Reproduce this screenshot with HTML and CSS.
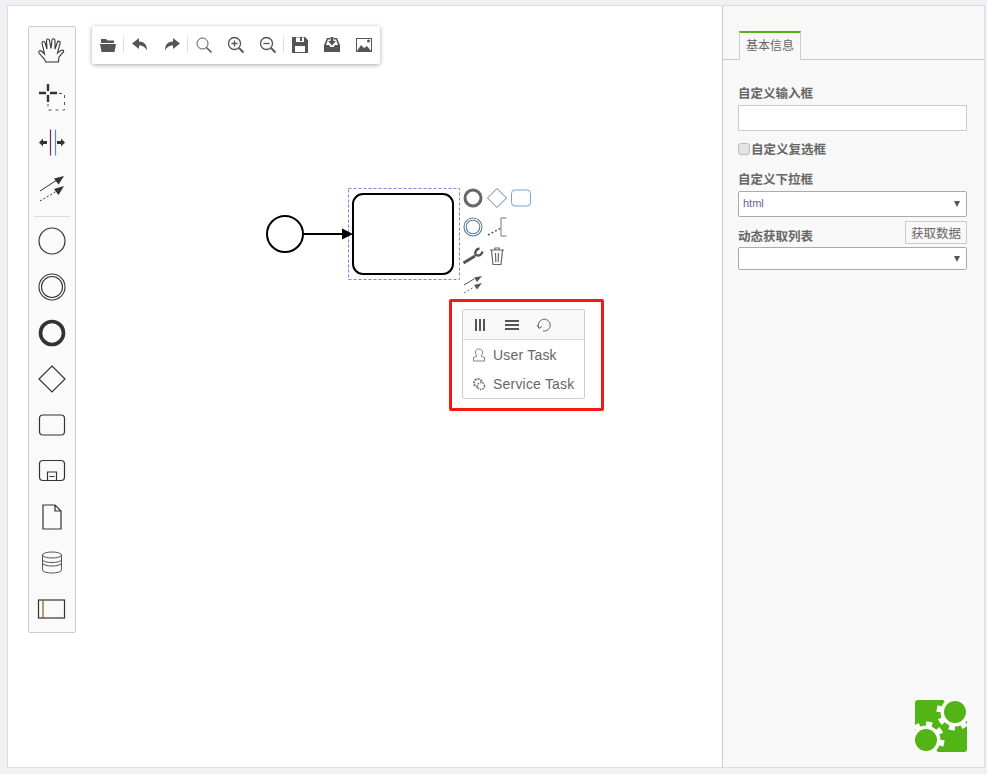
FILE: index.html
```html
<!DOCTYPE html>
<html lang="en">
<head>
  <meta charset="UTF-8" />
  <title>流程设计器</title>
  <link rel="stylesheet" href="styles.css">
</head>
<body>
  <div class="frame">
    <main class="canvas">
      <!-- palette -->
      <div class="palette">
        <div class="tool"><svg width="30" height="30" viewBox="0 0 30 30" fill="none" stroke="#333" stroke-width="1.1"><path d="M9 26c-1-3-4-5-7-9-1-2 1-3 2.500-2l3 3L5 7c0-2 2-2 3-.5L10 13 9.500 4.500c0-2 2.500-2 3 0L14 12.500 15 4c.5-2 3-1.500 3 .5V13l2.500-7c.5-1.500 3-1 2.700 1L20.500 17c2-1.500 3.500-3 5-3 1.500.5 1.500 1.500.5 2.500L22 21l-.5 5z"/></svg></div>
        <div class="tool"><svg width="30" height="30" viewBox="0 0 30 30" fill="none" stroke="#333"><path d="M11 2v7M11 13v7M2 11h7M13 11h7" stroke-width="2.400"/><path d="M22 11.500h5.500v16.500H11V22" stroke="#555" stroke-dasharray="3 4"/></svg></div>
        <div class="tool"><svg width="30" height="30" viewBox="0 0 30 30" fill="#333"><path d="M13.500 1.500v26" stroke="#7a2a5a" stroke-width="1.200"/><path d="M18.500 1.500v26" stroke="#5a8fb0" stroke-width="1.200"/><path d="M2 14.500l4-4v2.500h4v3H6v2.500zM28 14.500l-4-4v2.500h-4v3h4v2.500z"/></svg></div>
        <div class="tool"><svg width="30" height="30" viewBox="0 0 30 30" fill="#333"><path d="M3 17l17-11" stroke="#333" stroke-width="1"/><path d="M27 2l-10 2.500 4.500 6z"/><path d="M3 27l17-10" stroke="#333" stroke-dasharray="2 2"/><path d="M27 12l-10 3 4.500 6z"/></svg></div>
        <div class="sep"></div>
        <div class="tool"><svg width="30" height="30" viewBox="0 0 30 30" fill="none" stroke="#333" stroke-width="1.200"><circle cx="15" cy="15" r="13"/></svg></div>
        <div class="tool"><svg width="30" height="30" viewBox="0 0 30 30" fill="none" stroke="#333" stroke-width="1.100"><circle cx="15" cy="15" r="13"/><circle cx="15" cy="15" r="10.500"/></svg></div>
        <div class="tool"><svg width="30" height="30" viewBox="0 0 30 30" fill="none" stroke="#333" stroke-width="3.600"><circle cx="15" cy="15" r="11.500"/></svg></div>
        <div class="tool"><svg width="30" height="30" viewBox="0 0 30 30" fill="none" stroke="#333" stroke-width="1.200"><path d="M15 2l13 13-13 13L2 15z"/></svg></div>
        <div class="tool"><svg width="30" height="30" viewBox="0 0 30 30" fill="none" stroke="#333" stroke-width="1.200"><rect x="2.500" y="5" width="25" height="20" rx="3.500"/></svg></div>
        <div class="tool"><svg width="30" height="30" viewBox="0 0 30 30" fill="none" stroke="#333" stroke-width="1.200"><rect x="2.500" y="4.500" width="25" height="20" rx="3.500"/><path d="M10.500 24.500V16h9v8.500M12.500 20.500h5"/></svg></div>
        <div class="tool"><svg width="30" height="30" viewBox="0 0 30 30" fill="none" stroke="#333" stroke-width="1.200"><path d="M6 3h12l6 6v18H6zM18 3v6h6"/></svg></div>
        <div class="tool"><svg width="30" height="30" viewBox="0 0 30 30" fill="none" stroke="#444" stroke-width=".9"><ellipse cx="15" cy="7" rx="9.500" ry="3"/><path d="M5.500 7v15c0 4 19 4 19 0V7M5.500 11.500c0 4 19 4 19 0M5.500 15c0 4 19 4 19 0"/></svg></div>
        <div class="tool"><svg width="30" height="30" viewBox="0 0 30 30" fill="none" stroke="#333" stroke-width="1.200"><rect x="1.500" y="6" width="26" height="18"/><path d="M6 6v18" stroke="#8a5a20"/></svg></div>
      </div>

      <!-- top toolbar -->
      <div class="toolbar">
        <button class="tb"><svg width="18" height="18" viewBox="0 0 18 18" fill="#555"><path d="M2 3h5l1.500 1.500H15V7H2zM1 8h16l-1.500 8h-13z"/></svg></button>
        <i class="tb-sep"></i>
        <button class="tb"><svg width="18" height="18" viewBox="0 0 18 18" fill="#555"><path d="M1 7.500L8 2v3.500c5 0 8 3 8 9-2-3.500-4-5-8-5V13z"/></svg></button>
        <button class="tb"><svg width="18" height="18" viewBox="0 0 18 18" fill="#555"><path d="M17 7.500L10 2v3.500c-5 0-8 3-8 9 2-3.500 4-5 8-5V13z"/></svg></button>
        <i class="tb-sep"></i>
        <button class="tb"><svg width="18" height="18" viewBox="0 0 18 18" fill="none" stroke="#555" stroke-width="1"><circle cx="7.500" cy="7.500" r="5.500"/><path d="M11.500 11.500l5 5" stroke-width="1.600"/></svg></button>
        <button class="tb"><svg width="18" height="18" viewBox="0 0 18 18" fill="none" stroke="#555" stroke-width="1.300"><circle cx="7.500" cy="7.500" r="6"/><path d="M12 12l4.500 4.500" stroke-width="1.800"/><path d="M4.500 7.500h6M7.500 4.500v6"/></svg></button>
        <button class="tb"><svg width="18" height="18" viewBox="0 0 18 18" fill="none" stroke="#555" stroke-width="1.300"><circle cx="7.500" cy="7.500" r="6"/><path d="M12 12l4.500 4.500" stroke-width="1.800"/><path d="M4.500 7.500h6"/></svg></button>
        <i class="tb-sep"></i>
        <button class="tb"><svg width="18" height="18" viewBox="0 0 18 18" fill="#555"><path fill-rule="evenodd" d="M1 1h13l3 3v13H1zM5 1.500V6h8V1.500h-2V5H9V1.500zM4 10v6h10v-6z"/></svg></button>
        <button class="tb"><svg width="18" height="18" viewBox="0 0 18 18" fill="#555"><path d="M4 2h3v1.500H5L3 9h3l1.500 2h3L12 9h3l-2-5.500h-2V2h3l3 7v7H1V9z"/><path d="M7.500 1h3v4H13l-4 4.500L5 5h2.500z"/></svg></button>
        <button class="tb"><svg width="18" height="18" viewBox="0 0 18 18"><rect x="1.500" y="2.500" width="15" height="13" fill="#fff" stroke="#555"/><path d="M2 15l4-6 3 3 3-2 4 5z" fill="#555"/><circle cx="13.500" cy="5" r="1.500" fill="#555"/></svg></button>
      </div>

      <!-- diagram -->
      <svg class="diagram" width="200" height="100" viewBox="262 184 200 100" fill="none">
        <rect x="348.500" y="188.500" width="111" height="91" stroke="#7f7ff7" stroke-dasharray="3 2"/>
        <circle cx="285" cy="234" r="18" stroke="#000" stroke-width="2"/>
        <path d="M304 234h40" stroke="#000" stroke-width="2"/>
        <path d="M342 228.500l11 5.500-11 5.500z" fill="#000"/>
        <rect x="353" y="194" width="100" height="80" rx="10" fill="#fff" stroke="#000" stroke-width="2"/>
      </svg>

      <!-- context pad -->
      <div class="pad">
        <svg width="20" height="20" viewBox="0 0 20 20" fill="none" stroke="#666" stroke-width="3"><circle cx="10" cy="10" r="8"/></svg>
        <svg width="20" height="20" viewBox="0 0 20 20" fill="none" stroke="#5a7f9a"><path d="M10 .5l9.500 9.500-9.500 9.500L.5 10z"/></svg>
        <svg width="20" height="20" viewBox="0 0 20 20" fill="none" stroke="#6fa8cc"><rect x=".5" y="2" width="19" height="16" rx="3.500"/></svg>
        <svg width="20" height="20" viewBox="0 0 20 20" fill="none" stroke="#5a7f9a" stroke-width="1.100"><circle cx="10" cy="10" r="9"/><circle cx="10" cy="10" r="6.800"/></svg>
        <svg width="20" height="20" viewBox="0 0 20 20" fill="none" stroke="#555"><path d="M1 18l13-7" stroke-dasharray="2 2" stroke-width="1.500"/><path d="M19.500 1H14v18h5.500" stroke="#777"/></svg>
        <i></i>
        <svg width="22" height="20" viewBox="0 0 22 20" fill="none" stroke="#555"><path d="M1.500 17L13 10" stroke-width="3"/><path d="M20.500 5.500c-.5 3-3.500 5-6.500 3.500-1.500-2-.5-6 3.500-6.500" stroke-width="2.400"/></svg>
        <svg width="20" height="20" viewBox="0 0 20 20" fill="none" stroke="#666"><path d="M3 4h14M8 3.500V2h4v1.500M4.500 4.500L6 18.500h8l1.500-14M8.500 7l.3 9M11.500 7l-.3 9" stroke-width="1.200"/></svg>
        <i></i>
        <svg width="20" height="20" viewBox="0 0 20 20" fill="#555"><path d="M1 10l10-6" stroke="#555"/><path d="M19 1l-8 1.500 3 4.500z"/><path d="M1 18l10-6" stroke="#666" stroke-dasharray="2 2"/><path d="M19 8l-8 2 3 4.500z"/></svg>
      </div>

      <!-- replace menu -->
      <div class="marker">
        <div class="popup">
          <div class="popup-head">
            <svg width="14" height="14" viewBox="0 0 14 14" fill="#555"><path d="M2 1h2v12H2zM6 1h2v12H6zM10 1h2v12h-2z"/></svg>
            <svg width="14" height="14" viewBox="0 0 14 14" fill="#555"><path d="M0 2h14v2H0zM0 6h14v2H0zM0 10h14v2H0z"/></svg>
            <svg class="undo" width="16" height="16" viewBox="0 0 16 16" fill="none" stroke="#666"><path d="M3 11a6 6 0 1 1 4 3M1 8l2 3.500 3-2"/></svg>
          </div>
          <div class="popup-item">
            <svg width="14" height="14" viewBox="0 0 14 14" fill="none" stroke="#777" stroke-width=".9"><path d="M1.500 13v-3.500L5 8c-1-1-1.500-2-1.500-4 0-4 7-4 7 0 0 2-.5 3-1.500 4l3.500 1.500V13z"/></svg>
            User Task
          </div>
          <div class="popup-item">
            <svg width="14" height="14" viewBox="0 0 14 14" fill="none" stroke="#777"><circle cx="6" cy="6" r="4" stroke-dasharray="2 1" stroke-width="2"/><circle cx="9" cy="9" r="3.500" fill="#fff" stroke-dasharray="1.500 1" stroke-width="1.500"/></svg>
            Service Task
          </div>
        </div>
      </div>
    </main>

    <aside class="panel">
      <div class="tabs">
        <div class="tab">基本信息</div>
      </div>
      <form class="props">
        <label class="field-label">自定义输入框</label>
        <input class="text-input" type="text" />

        <label class="check-row"><input type="checkbox" />自定义复选框</label>

        <label class="field-label select-label">自定义下拉框</label>
        <div class="select-wrap tall">
          <select><option>html</option></select>
        </div>

        <div class="fetch-row">
          <label class="field-label">动态获取列表</label>
          <button type="button" class="fetch-btn">获取数据</button>
        </div>
        <div class="select-wrap">
          <select><option></option></select>
        </div>
      </form>

      <svg class="logo" width="52" height="52" viewBox="0 0 52 52" fill="none">
        <rect width="52" height="52" rx="3" fill="#52b415"/>
        <path d="M46 0h6v6h-6zM0 46h6v6H0z" fill="#fff"/>
        <circle cx="40" cy="12" r="14.500" fill="#fff"/>
        <circle cx="40" cy="12" r="16" stroke="#fff" stroke-width="5" stroke-dasharray="6 6.500"/>
        <circle cx="40" cy="12" r="11" fill="#52b415"/>
        <circle cx="11" cy="40" r="14.500" fill="#fff"/>
        <circle cx="11" cy="40" r="16" stroke="#fff" stroke-width="5" stroke-dasharray="6 6.500"/>
        <circle cx="11" cy="40" r="11" fill="#52b415"/>
      </svg>
    </aside>
  </div>
</body>
</html>
```

FILE: styles.css
```css
html, body {
  margin: 0;
  height: 100%;
}
body {
  background: #eff1f5;
  font-family: "Liberation Sans", "Noto Sans CJK SC", sans-serif;
  color: #555;
  padding: 5px 2px 6px 7px;
  box-sizing: border-box;
}
.frame {
  display: flex;
  height: 100%;
  border: 1px solid #ddd;
  box-sizing: border-box;
}

/* canvas */
.canvas {
  position: relative;
  width: 714px;
  background: #fff;
  border-right: 1px solid #ccc;
  flex-shrink: 0;
}
.palette {
  position: absolute;
  left: 20px;
  top: 20px;
  width: 46px;
  padding: 1px 0 0;
  height: 604px;
  background: #fafafa;
  border: 1px solid #ccc;
  border-radius: 2px;
}
.tool {
  height: 46px;
  display: flex;
  align-items: center;
  justify-content: center;
}
.sep {
  height: 1px;
  margin: 4px 5px 1px;
  background: #ddd;
}
.toolbar {
  position: absolute;
  left: 84px;
  top: 20px;
  height: 38px;
  display: flex;
  align-items: center;
  background: #fff;
  border-radius: 2px;
  box-shadow: 0 1px 4px rgba(0,0,0,0.35);
}
.tb {
  width: 32px;
  height: 38px;
  padding: 0;
  border: none;
  background: none;
  display: flex;
  align-items: center;
  justify-content: center;
}
.tb-sep {
  width: 1px;
  height: 16px;
  margin-left: -1px;
  background: #ddd;
}
.diagram {
  position: absolute;
  left: 254px;
  top: 178px;
}
.pad {
  position: absolute;
  left: 453px;
  top: 177px;
  width: 72px;
  display: grid;
  grid-template-columns: repeat(3, 24px);
  grid-auto-rows: 29px;
  align-items: center;
  justify-items: center;
}

/* replace menu, in the red box */
.marker {
  position: absolute;
  left: 441px;
  top: 293px;
  width: 155px;
  height: 112px;
  padding: 7px 0 0 10px;
  box-sizing: border-box;
  border: 3px solid #f31b12;
  border-radius: 2px;
}
.popup {
  width: 121px;
  height: 88px;
  background: #fff;
  border: 1px solid #ccc;
  border-radius: 2px;
}
.popup-head {
  height: 29px;
  display: flex;
  align-items: center;
  gap: 18px;
  padding-left: 10px;
  background: #f8f8f8;
  border-bottom: 1px solid #ddd;
}
.undo {
  margin-left: -1px;
}
.popup-item {
  height: 29px;
  display: flex;
  align-items: center;
  gap: 7px;
  padding: 1px 0 0 9px;
  box-sizing: border-box;
  font-size: 14px;
  letter-spacing: 0.2px;
  color: #666;
}

/* properties panel */
.panel {
  position: relative;
  flex: 1;
  background: #f8f8f8;
}
.tabs {
  height: 54px;
  padding: 25px 0 0 16px;
  box-sizing: border-box;
  border-bottom: 1px solid #ccc;
}
.tab {
  width: 62px;
  height: 29px;
  line-height: 27px;
  box-sizing: border-box;
  border: 1px solid #ccc;
  border-top: 2px solid #52b415;
  border-bottom: none;
  background: #f8f8f8;
  text-align: center;
  font-size: 12px;
  color: #666;
}
.props {
  padding: 27px 17px 0 15px;
  display: flex;
  flex-direction: column;
}
.field-label {
  font-size: 12.5px;
  font-weight: bold;
  line-height: 14px;
  color: #666;
}
.text-input {
  height: 26px;
  margin-top: 4px;
  box-sizing: border-box;
  border: 1px solid #ccc;
  background: #fff;
}
.check-row {
  display: flex;
  align-items: center;
  margin-top: 10px;
  height: 14px;
  font-size: 12.5px;
  font-weight: bold;
  color: #666;
}
.check-row input {
  width: 12px;
  height: 12px;
  margin: 2px 1px 0 0;
  appearance: none;
  background: #e4e4e4;
  border: 1px solid #bbb;
  border-radius: 3px;
}
.select-label {
  margin-top: 18px;
}
.select-wrap {
  position: relative;
  height: 23px;
}
.select-wrap.tall {
  height: 26px;
  margin-top: 4px;
}
.select-wrap::after {
  content: "";
  position: absolute;
  right: 7px;
  top: 50%;
  margin-top: -3px;
  border: 3px solid transparent;
  border-top: 6px solid #555;
  border-bottom: none;
}
.select-wrap select {
  width: 100%;
  height: 100%;
  appearance: none;
  background: #fff;
  border: 1px solid #aaa;
  border-radius: 2px;
  padding: 0 4px 3px;
  font-family: inherit;
  font-size: 11px;
  color: #665f9c;
}
.fetch-row {
  display: flex;
  justify-content: space-between;
  align-items: flex-end;
  height: 23px;
  margin-top: 4px;
  margin-bottom: 3px;
}
.fetch-btn {
  width: 62px;
  height: 23px;
  padding: 0;
  border: 1px solid #ccc;
  background: #f8f8f8;
  font-family: inherit;
  font-size: 12.5px;
  color: #666;
}
.logo {
  position: absolute;
  right: 17px;
  bottom: 15px;
}
```
